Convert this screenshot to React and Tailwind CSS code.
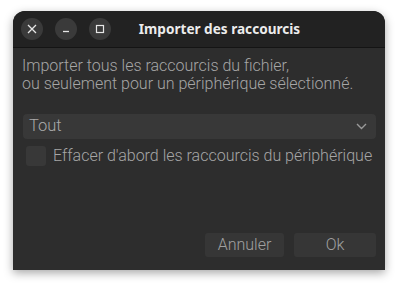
import React, { useState } from "react"

const CircleButton = ({ children }) => (
  <button className="w-[22px] h-[22px] rounded-full bg-[#3a3a3a] flex items-center justify-center text-[#e6e6e6]">
    {children}
  </button>
)

const App = () => {
  const [erase, setErase] = useState(false)

  return (
    <div className="w-[398px] h-[286px] bg-white pt-[11px] pl-[13px]" style={{ fontFamily: "Roboto, sans-serif" }}>
      <div className="w-[372px] h-[259px] rounded-t-[12px] bg-[#2d2d2d] flex flex-col shadow-[0_3px_10px_rgba(0,0,0,0.35)]">
        {/* title bar */}
        <div className="h-[37px] shrink-0 flex items-center pl-[8px] bg-[#222222] rounded-t-[12px] border-b border-[#141414]">
          <div className="flex gap-[12px]">
            <CircleButton>
              <svg width="10" height="10" viewBox="0 0 10 10">
                <path d="M1 1L9 9M9 1L1 9" stroke="currentColor" strokeWidth="1.3" />
              </svg>
            </CircleButton>
            <CircleButton>
              <svg width="10" height="10" viewBox="0 0 10 10">
                <path d="M2 7.5H8" stroke="currentColor" strokeWidth="1.3" />
              </svg>
            </CircleButton>
            <CircleButton>
              <svg width="10" height="10" viewBox="0 0 10 10">
                <rect x="1.5" y="1.5" width="7" height="7" fill="none" stroke="currentColor" strokeWidth="1.2" />
              </svg>
            </CircleButton>
          </div>
          <div
            className="flex-1 text-center pr-[57px] text-[13.6px] font-bold text-[#ececec]"
            style={{ fontFamily: "'Noto Sans', sans-serif" }}
          >
            Importer des raccourcis
          </div>
        </div>

        {/* body */}
        <div className="flex-1 flex flex-col px-[9px] pt-[9px] pb-[13px]">
          <p className="text-[16px] leading-[18px] font-light text-[#a6a6a6]">
            Importer tous les raccourcis du fichier,
            <br />
            ou seulement pour un périphérique sélectionné.
          </p>

          <div className="mt-[21px] ml-px h-[25px] rounded-[4px] bg-[#383838] flex items-center justify-between pl-[6px] pr-[9px]">
            <span className="text-[16.5px] font-light text-[#aaaaaa]">Tout</span>
            <svg width="11" height="7" viewBox="0 0 11 7">
              <path d="M1 1L5.5 5.5L10 1" fill="none" stroke="#9a9a9a" strokeWidth="1.4" />
            </svg>
          </div>

          <label className="mt-[5px] ml-[4px] flex items-center gap-[7px] cursor-pointer">
            <span
              onClick={() => setErase(!erase)}
              className="w-[20px] h-[20px] rounded-[3px] bg-[#383838] shrink-0"
            />
            <span className="text-[16px] font-light text-[#a6a6a6]">
              Effacer d'abord les raccourcis du périphérique
            </span>
          </label>

          <div className="mt-auto flex justify-end gap-[10px]">
            <button className="w-[79px] h-[24px] rounded-[3px] bg-[#363636] text-[16px] font-light text-[#a0a0a0]">
              Annuler
            </button>
            <button className="w-[82px] h-[24px] rounded-[3px] bg-[#363636] text-[16px] font-light text-[#a0a0a0]">
              Ok
            </button>
          </div>
        </div>
      </div>
    </div>
  )
}

export default App
